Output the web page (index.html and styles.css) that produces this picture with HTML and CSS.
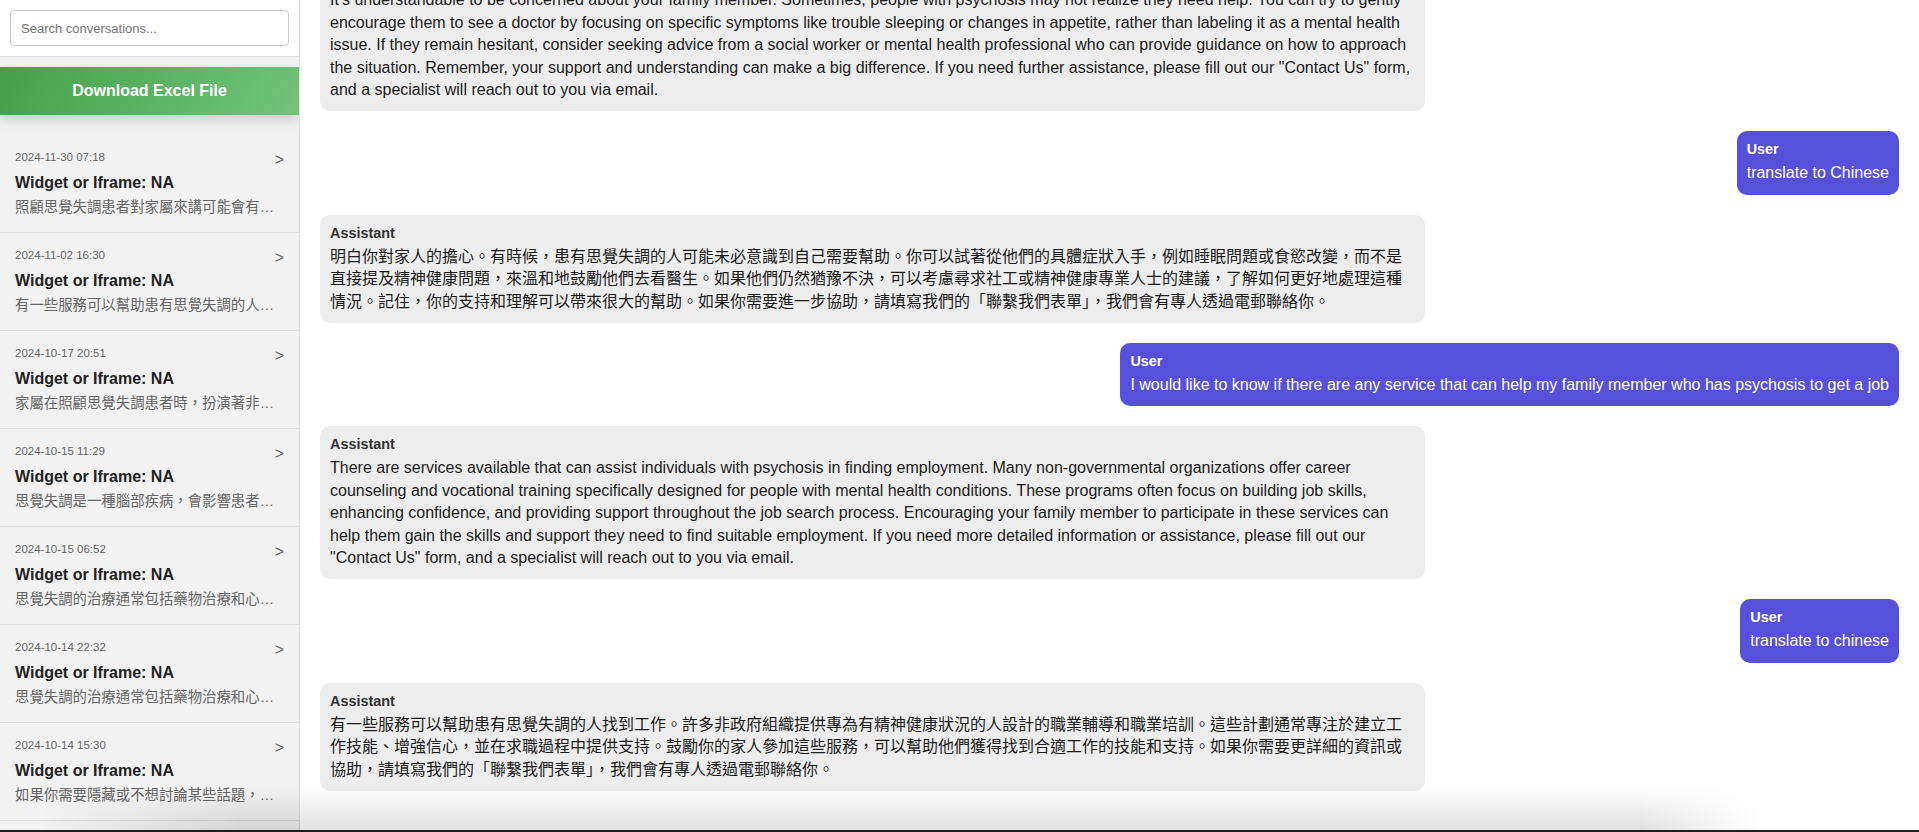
FILE: index.html
```html
<!DOCTYPE html>
<html lang="zh-Hant">
<head>
<meta charset="utf-8">
<title>Conversations</title>
<link rel="stylesheet" href="styles.css">
</head>
<body>
<div class="app">
  <aside class="sidebar">
    <div class="search-box">
      <input class="search-input" type="text" placeholder="Search conversations...">
    </div>
    <div class="sidebar-scroll">
      <button class="download-btn" type="button">Download Excel File</button>
      <ul class="conv-list">
        <li class="conv-item">
          <div class="conv-head"><span class="conv-time">2024-11-30 07:18</span><span class="conv-arrow">&gt;</span></div>
          <div class="conv-title">Widget or Iframe: NA</div>
          <div class="conv-preview">照顧思覺失調患者對家屬來講可能會有…</div>
        </li>
        <li class="conv-item">
          <div class="conv-head"><span class="conv-time">2024-11-02 16:30</span><span class="conv-arrow">&gt;</span></div>
          <div class="conv-title">Widget or Iframe: NA</div>
          <div class="conv-preview">有一些服務可以幫助患有思覺失調的人…</div>
        </li>
        <li class="conv-item">
          <div class="conv-head"><span class="conv-time">2024-10-17 20:51</span><span class="conv-arrow">&gt;</span></div>
          <div class="conv-title">Widget or Iframe: NA</div>
          <div class="conv-preview">家屬在照顧思覺失調患者時，扮演著非…</div>
        </li>
        <li class="conv-item">
          <div class="conv-head"><span class="conv-time">2024-10-15 11:29</span><span class="conv-arrow">&gt;</span></div>
          <div class="conv-title">Widget or Iframe: NA</div>
          <div class="conv-preview">思覺失調是一種腦部疾病，會影響患者…</div>
        </li>
        <li class="conv-item">
          <div class="conv-head"><span class="conv-time">2024-10-15 06:52</span><span class="conv-arrow">&gt;</span></div>
          <div class="conv-title">Widget or Iframe: NA</div>
          <div class="conv-preview">思覺失調的治療通常包括藥物治療和心…</div>
        </li>
        <li class="conv-item">
          <div class="conv-head"><span class="conv-time">2024-10-14 22:32</span><span class="conv-arrow">&gt;</span></div>
          <div class="conv-title">Widget or Iframe: NA</div>
          <div class="conv-preview">思覺失調的治療通常包括藥物治療和心…</div>
        </li>
        <li class="conv-item">
          <div class="conv-head"><span class="conv-time">2024-10-14 15:30</span><span class="conv-arrow">&gt;</span></div>
          <div class="conv-title">Widget or Iframe: NA</div>
          <div class="conv-preview">如果你需要隱藏或不想討論某些話題，…</div>
        </li>
      </ul>
    </div>
  </aside>
  <main class="chat">
    <div class="msg assistant">
      <div class="msg-role">Assistant</div>
      <div class="msg-text">It's understandable to be concerned about your family member. Sometimes, people with psychosis may not realize they need help. You can try to gently encourage them to see a doctor by focusing on specific symptoms like trouble sleeping or changes in appetite, rather than labeling it as a mental health issue. If they remain hesitant, consider seeking advice from a social worker or mental health professional who can provide guidance on how to approach the situation. Remember, your support and understanding can make a big difference. If you need further assistance, please fill out our "Contact Us" form, and a specialist will reach out to you via email.</div>
    </div>
    <div class="msg user">
      <div class="msg-role">User</div>
      <div class="msg-text">translate to Chinese</div>
    </div>
    <div class="msg assistant">
      <div class="msg-role">Assistant</div>
      <div class="msg-text">明白你對家人的擔心。有時候，患有思覺失調的人可能未必意識到自己需要幫助。你可以試著從他們的具體症狀入手，例如睡眠問題或食慾改變，而不是直接提及精神健康問題，來溫和地鼓勵他們去看醫生。如果他們仍然猶豫不決，可以考慮尋求社工或精神健康專業人士的建議，了解如何更好地處理這種情況。記住，你的支持和理解可以帶來很大的幫助。如果你需要進一步協助，請填寫我們的「聯繫我們表單」，我們會有專人透過電郵聯絡你。</div>
    </div>
    <div class="msg user">
      <div class="msg-role">User</div>
      <div class="msg-text">I would like to know if there are any service that can help my family member who has psychosis to get a job</div>
    </div>
    <div class="msg assistant">
      <div class="msg-role">Assistant</div>
      <div class="msg-text">There are services available that can assist individuals with psychosis in finding employment. Many non-governmental organizations offer career counseling and vocational training specifically designed for people with mental health conditions. These programs often focus on building job skills, enhancing confidence, and providing support throughout the job search process. Encouraging your family member to participate in these services can help them gain the skills and support they need to find suitable employment. If you need more detailed information or assistance, please fill out our "Contact Us" form, and a specialist will reach out to you via email.</div>
    </div>
    <div class="msg user">
      <div class="msg-role">User</div>
      <div class="msg-text">translate to chinese</div>
    </div>
    <div class="msg assistant">
      <div class="msg-role">Assistant</div>
      <div class="msg-text">有一些服務可以幫助患有思覺失調的人找到工作。許多非政府組織提供專為有精神健康狀況的人設計的職業輔導和職業培訓。這些計劃通常專注於建立工作技能、增強信心，並在求職過程中提供支持。鼓勵你的家人參加這些服務，可以幫助他們獲得找到合適工作的技能和支持。如果你需要更詳細的資訊或協助，請填寫我們的「聯繫我們表單」，我們會有專人透過電郵聯絡你。</div>
    </div>
  </main>
</div>
<div class="screen-edge"></div>
<div class="screen-shadow"></div>
</body>
</html>
```

FILE: styles.css
```css
html, body {
  margin: 0;
  padding: 0;
  height: 100%;
}

body {
  display: flex;
  flex-direction: column;
  font-family: "Liberation Sans", "Noto Sans CJK TC", Arial, sans-serif;
  color: #222;
  background: #fff;
}

.app {
  flex: 1;
  min-height: 0;
  display: flex;
  overflow: hidden;
}

/* Sidebar */
.sidebar {
  width: 299px;
  flex: none;
  display: flex;
  flex-direction: column;
  background: #f2f2f2;
  border-right: 1px solid #ddd;
  overflow: hidden;
}

.search-box {
  background: #fff;
  padding: 10px;
  border-bottom: 1px solid #ddd;
}

.search-input {
  display: block;
  box-sizing: border-box;
  width: 100%;
  height: 36px;
  padding: 0 10px;
  border: 1px solid #ccc;
  border-radius: 4px;
  font-family: "Liberation Sans", Arial, sans-serif;
  font-size: 13px;
  color: #222;
  background: #fff;
  outline: none;
}

.search-input::placeholder {
  color: #767676;
}

.sidebar-scroll {
  flex: 1;
  overflow: hidden;
  padding-top: 10px;
}

.download-btn {
  display: block;
  width: 100%;
  padding: 15px;
  margin: 0 0 20px;
  border: 0;
  background: linear-gradient(120deg, #43a148 0%, #5db464 55%, #74c27f 100%);
  color: #fff;
  font-family: "Liberation Sans", Arial, sans-serif;
  font-size: 16px;
  font-weight: bold;
  line-height: 18px;
  box-shadow: 0 5px 12px rgba(0, 0, 0, 0.16);
  cursor: pointer;
}

.conv-list {
  list-style: none;
  margin: 0;
  padding: 0;
}

.conv-item {
  padding: 15px;
  border-bottom: 1px solid #ddd;
}

.conv-head {
  display: flex;
  justify-content: space-between;
  align-items: flex-start;
  height: 18px;
}

.conv-time {
  font-size: 11.5px;
  line-height: 14px;
  color: #666;
}

.conv-arrow {
  font-size: 16px;
  line-height: 18px;
  color: #666;
  margin-top: 1px;
}

.conv-title {
  margin-top: 5px;
  font-size: 16px;
  font-weight: bold;
  line-height: 19px;
  color: #222;
}

.conv-preview {
  margin-top: 5px;
  font-size: 14.4px;
  line-height: 20px;
  color: #666;
  white-space: nowrap;
  overflow: hidden;
  text-overflow: ellipsis;
}

/* Chat */
.chat {
  flex: 1;
  min-width: 0;
  display: flex;
  flex-direction: column;
  justify-content: flex-end;
  padding: 20px 20px 19px;
  overflow: hidden;
  background: #fff;
}

.msg {
  flex: none;
  box-sizing: border-box;
  max-width: 70%;
  padding: 10px;
  margin-bottom: 20px;
  border-radius: 10px;
}

.msg.assistant {
  align-self: flex-start;
  background: #ededed;
  color: #1c1c1c;
}

.msg.user {
  align-self: flex-end;
  background: #5650db;
  color: #fff;
}

.msg-role {
  font-size: 14.4px;
  font-weight: bold;
  line-height: 17px;
  margin-bottom: 4px;
}

.msg.assistant .msg-role {
  color: #333;
}

.msg-text {
  font-size: 16px;
  line-height: 22.4px;
}

/* Bottom window edge of the screenshot */
.screen-edge {
  flex: none;
  height: 2px;
  background: #1e1e1e;
}

.screen-shadow {
  position: fixed;
  left: 0;
  right: 0;
  bottom: 2px;
  height: 44px;
  pointer-events: none;
  background: linear-gradient(to bottom, rgba(0, 0, 0, 0), rgba(0, 0, 0, 0.12));
  -webkit-mask-image: linear-gradient(to right, transparent 40px, #000 240px, #000 1640px, transparent 1760px);
  mask-image: linear-gradient(to right, transparent 40px, #000 240px, #000 1640px, transparent 1760px);
}
```
